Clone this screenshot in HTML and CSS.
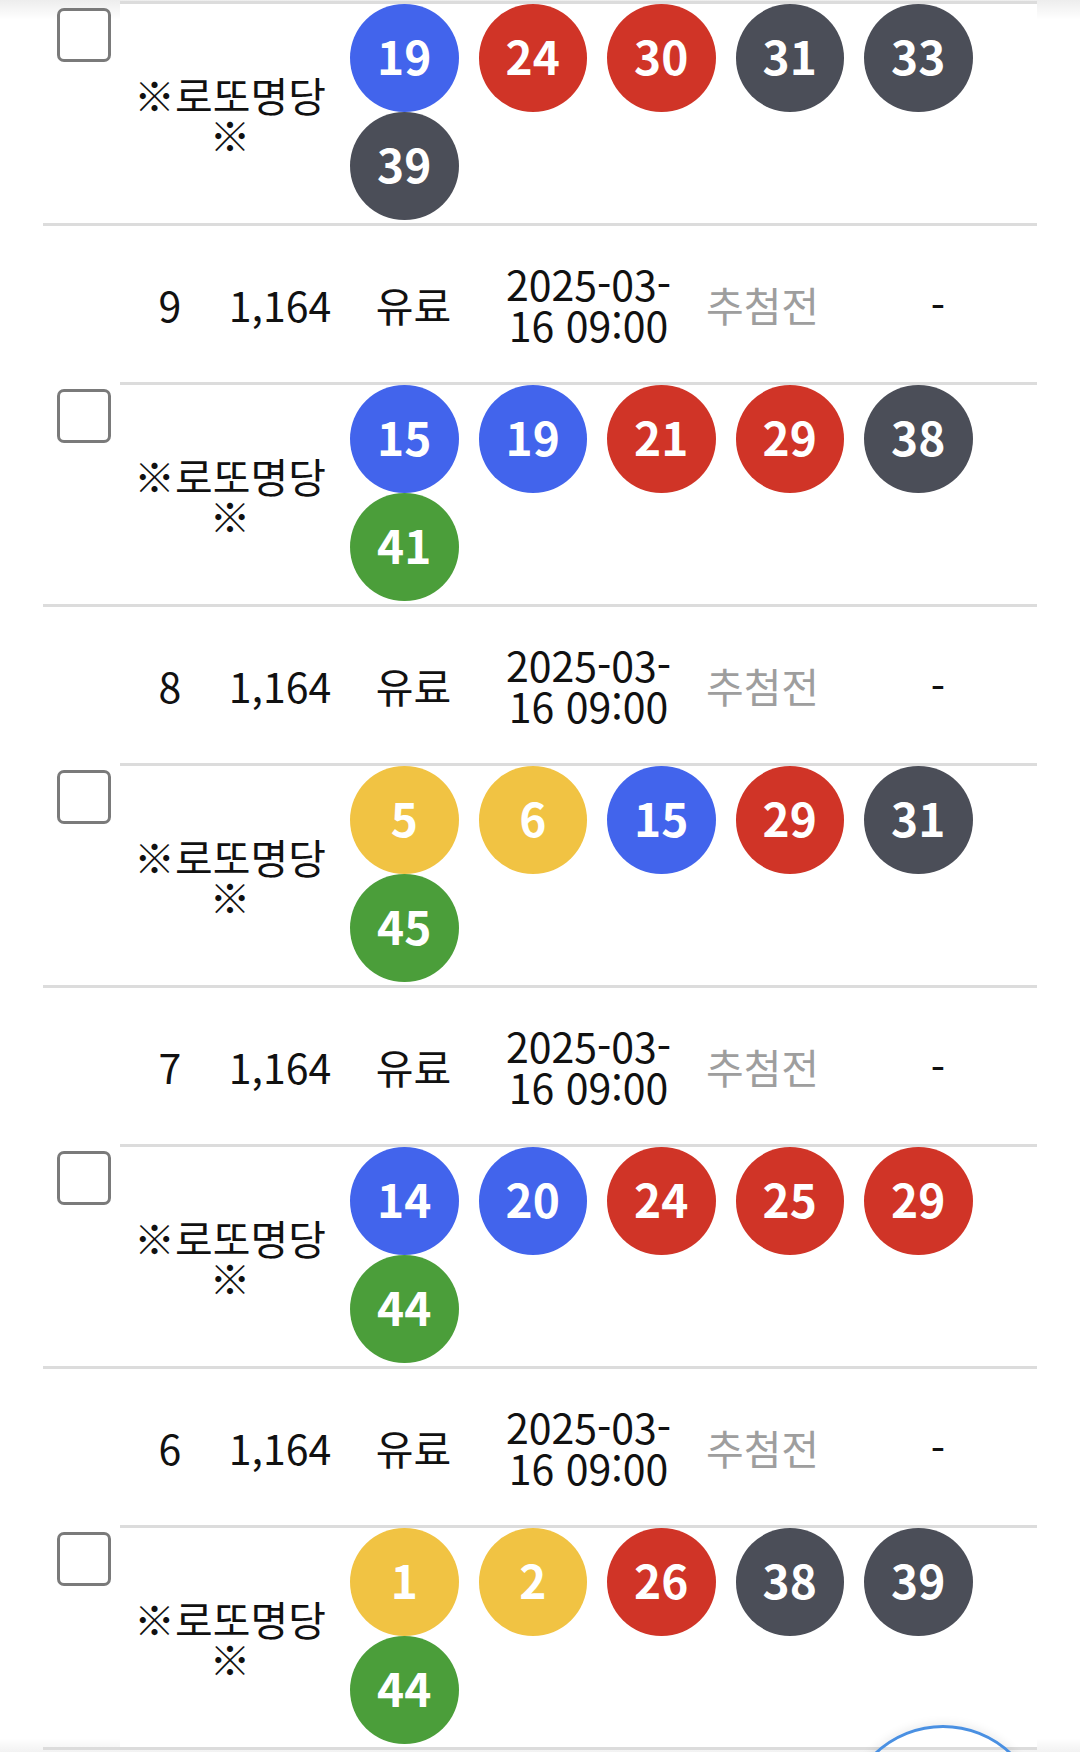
FILE: index.html
```html
<!DOCTYPE html>
<html lang="ko">
<head>
<meta charset="utf-8">
<title>구매 내역</title>
<link rel="stylesheet" href="styles.css">
</head>
<body>
<main class="list">
  <section class="entry entry--partial">
    <div class="pick">
      <div class="pick-check"><span class="checkbox"></span></div>
      <div class="pick-body">
        <div class="pick-name">※로또명당※</div>
        <div class="balls">
          <span class="ball ball--blue">19</span>
          <span class="ball ball--red">24</span>
          <span class="ball ball--red">30</span>
          <span class="ball ball--dark">31</span>
          <span class="ball ball--dark">33</span>
          <span class="ball ball--dark">39</span>
        </div>
      </div>
    </div>
  </section>

  <section class="entry">
    <div class="info">
      <span class="cell cell--lead"></span>
      <span class="cell cell--no">9</span>
      <span class="cell cell--amt">1,164</span>
      <span class="cell cell--type">유료</span>
      <span class="cell cell--date">2025-03-<br>16 09:00</span>
      <span class="cell cell--status">추첨전</span>
      <span class="cell cell--prize">-</span>
    </div>
    <div class="pick">
      <div class="pick-check"><span class="checkbox"></span></div>
      <div class="pick-body">
        <div class="pick-name">※로또명당※</div>
        <div class="balls">
          <span class="ball ball--blue">15</span>
          <span class="ball ball--blue">19</span>
          <span class="ball ball--red">21</span>
          <span class="ball ball--red">29</span>
          <span class="ball ball--dark">38</span>
          <span class="ball ball--green">41</span>
        </div>
      </div>
    </div>
  </section>

  <section class="entry">
    <div class="info">
      <span class="cell cell--lead"></span>
      <span class="cell cell--no">8</span>
      <span class="cell cell--amt">1,164</span>
      <span class="cell cell--type">유료</span>
      <span class="cell cell--date">2025-03-<br>16 09:00</span>
      <span class="cell cell--status">추첨전</span>
      <span class="cell cell--prize">-</span>
    </div>
    <div class="pick">
      <div class="pick-check"><span class="checkbox"></span></div>
      <div class="pick-body">
        <div class="pick-name">※로또명당※</div>
        <div class="balls">
          <span class="ball ball--yellow">5</span>
          <span class="ball ball--yellow">6</span>
          <span class="ball ball--blue">15</span>
          <span class="ball ball--red">29</span>
          <span class="ball ball--dark">31</span>
          <span class="ball ball--green">45</span>
        </div>
      </div>
    </div>
  </section>

  <section class="entry">
    <div class="info">
      <span class="cell cell--lead"></span>
      <span class="cell cell--no">7</span>
      <span class="cell cell--amt">1,164</span>
      <span class="cell cell--type">유료</span>
      <span class="cell cell--date">2025-03-<br>16 09:00</span>
      <span class="cell cell--status">추첨전</span>
      <span class="cell cell--prize">-</span>
    </div>
    <div class="pick">
      <div class="pick-check"><span class="checkbox"></span></div>
      <div class="pick-body">
        <div class="pick-name">※로또명당※</div>
        <div class="balls">
          <span class="ball ball--blue">14</span>
          <span class="ball ball--blue">20</span>
          <span class="ball ball--red">24</span>
          <span class="ball ball--red">25</span>
          <span class="ball ball--red">29</span>
          <span class="ball ball--green">44</span>
        </div>
      </div>
    </div>
  </section>

  <section class="entry">
    <div class="info">
      <span class="cell cell--lead"></span>
      <span class="cell cell--no">6</span>
      <span class="cell cell--amt">1,164</span>
      <span class="cell cell--type">유료</span>
      <span class="cell cell--date">2025-03-<br>16 09:00</span>
      <span class="cell cell--status">추첨전</span>
      <span class="cell cell--prize">-</span>
    </div>
    <div class="pick">
      <div class="pick-check"><span class="checkbox"></span></div>
      <div class="pick-body">
        <div class="pick-name">※로또명당※</div>
        <div class="balls">
          <span class="ball ball--yellow">1</span>
          <span class="ball ball--yellow">2</span>
          <span class="ball ball--red">26</span>
          <span class="ball ball--dark">38</span>
          <span class="ball ball--dark">39</span>
          <span class="ball ball--green">44</span>
        </div>
      </div>
    </div>
  </section>
</main>
<div class="fab" aria-hidden="true"></div>
</body>
</html>
```

FILE: styles.css
```css
* {
  box-sizing: border-box;
}

html {
  min-height: 100%;
  background:
    linear-gradient(to bottom, rgba(0, 0, 0, 0.07), rgba(0, 0, 0, 0) 20px),
    linear-gradient(to top, rgba(0, 0, 0, 0.05), rgba(0, 0, 0, 0) 14px),
    #ffffff;
}

body {
  margin: 0;
  font-family: "Noto Sans CJK KR", "Noto Sans", sans-serif;
  font-size: 41px;
  line-height: 40px;
  color: #111111;
}

.list {
  margin: 1px 43px 0;
}

.entry {
  border-bottom: 3px solid #dcdcdc;
}

/* info row */
.info {
  display: flex;
  align-items: center;
  height: 156px;
  background: #ffffff;
}

.cell {
  flex: none;
  text-align: center;
}

.cell--lead { width: 77px; }
.cell--no { width: 100px; }
.cell--amt { width: 120px; }
.cell--type { width: 147px; }
.cell--date { width: 203px; line-height: 41px; }
.cell--status { width: 145px; color: #9e9e9e; }
.cell--prize { width: 202px; padding-left: 4px; }

/* pick row */
.pick {
  display: flex;
}

.pick-check {
  flex: none;
  width: 77px;
  padding: 7px 0 0 14px;
}

.checkbox {
  display: block;
  width: 54px;
  height: 54px;
  border: 3px solid #7a7a7a;
  border-radius: 7px;
  background: #ffffff;
}

.pick-body {
  flex: 1;
  display: flex;
  border-top: 3px solid #dcdcdc;
  background: #ffffff;
}

.pick-name {
  flex: none;
  width: 220px;
  display: flex;
  align-items: center;
  justify-content: center;
  text-align: center;
  padding: 0 4px;
}

.balls {
  flex: 1;
  display: flex;
  flex-wrap: wrap;
  align-content: flex-start;
  padding-bottom: 3px;
}

.ball {
  width: 108.5px;
  height: 108px;
  margin: 0 10px;
  border-radius: 50%;
  display: flex;
  align-items: center;
  justify-content: center;
  padding-bottom: 6px;
  color: #ffffff;
  font-weight: 700;
  font-size: 46px;
  line-height: 46px;
}

.ball--yellow { background: #f1c343; }
.ball--blue { background: #4264ec; }
.ball--red { background: #d03427; }
.ball--dark { background: #4b4e58; }
.ball--green { background: #4b9e3a; }

/* floating action button peeking from the bottom */
.fab {
  position: fixed;
  left: 843px;
  top: 1725px;
  width: 200px;
  height: 200px;
  border-radius: 50%;
  border: 3px solid #4a90e2;
  box-shadow: 0 -2px 10px rgba(0, 0, 0, 0.08);
}
```
